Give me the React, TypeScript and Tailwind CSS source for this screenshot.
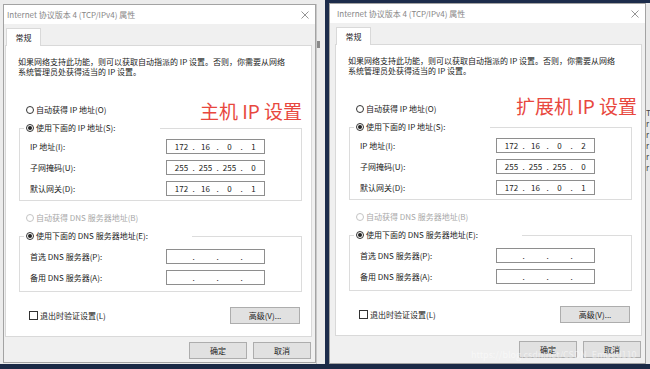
import React from 'react';

type DialogProps = {
  ip: string[];
  note: string;
  noteClass: string;
  boxClass: string;
  innerClass: string;
};

const Radio = ({ checked, disabled }: { checked?: boolean; disabled?: boolean }) => (
  <span
    className={`w-[8px] h-[8px] rounded-full border bg-white flex items-center justify-center shrink-0 ${
      disabled ? 'border-[#c4c4c4]' : 'border-[#333]'
    }`}
  >
    {checked && <span className="w-[4px] h-[4px] rounded-full bg-[#222]" />}
  </span>
);

const IpBox = ({ value }: { value?: string[] }) => (
  <div className="w-[99px] h-[15px] border border-[#8e8e8e] bg-white flex items-center pl-[4px] text-[8px] text-[#222]">
    {[0, 1, 2, 3].map((i) => (
      <React.Fragment key={i}>
        <span className="w-[21px] text-center">{value ? value[i] : ''}</span>
        {i < 3 && <span className="w-[3px] text-center">.</span>}
      </React.Fragment>
    ))}
  </div>
);

const Row = ({ label, value }: { label: string; value?: string[] }) => (
  <div className="h-[15px] flex items-center pl-[10px]">
    <span className="w-[136px] text-[8px] text-[#222]">{label}</span>
    <IpBox value={value} />
  </div>
);

const Button = ({ children, w }: { children: React.ReactNode; w: string }) => (
  <div className={`h-[17px] ${w} bg-[#e1e1e1] border border-[#adadad] flex items-center justify-center text-[8px] text-[#222]`}>
    {children}
  </div>
);

const Dialog = ({ ip, note, noteClass, boxClass, innerClass }: DialogProps) => (
  <div className={`flex flex-col bg-[#f0f0f0] border border-[#a3a3a3] ${boxClass}`}>
    {/* title bar */}
    <div className={`h-[19px] bg-white flex items-center justify-between pr-[6px] ${innerClass}`}>
      <span className="pl-[3px] text-[8px] text-[#868686] whitespace-nowrap">Internet 协议版本 4 (TCP/IPv4) 属性</span>
      <svg width="8" height="8" viewBox="0 0 8 8">
        <path d="M0.5 0.5 L7.5 7.5 M7.5 0.5 L0.5 7.5" stroke="#7a7a7a" strokeWidth="0.8" />
      </svg>
    </div>

    <div className={`flex flex-col flex-1 ${innerClass}`}>
      <div className="pt-[4px] pl-[2px]">
        <div className="relative z-10 -mb-px w-[35px] h-[18px] bg-white border border-b-0 border-[#d9d9d9] flex items-center justify-center text-[8px] text-[#222]">
          常规
        </div>
      </div>

      {/* tab page */}
      <div className="ml-[1px] mr-[3px] h-[292px] bg-white border border-[#d9d9d9] pl-[13px] pr-[9px] pt-[11px] flex flex-col">
        <p className="-ml-px text-[8px] leading-[10px] text-[#222] whitespace-nowrap">
          如果网络支持此功能，则可以获取自动指派的 IP 设置。否则，你需要从网络
          <br />
          系统管理员处获得适当的 IP 设置。
        </p>

        <div className="mt-[27px] h-[12px] flex items-center pl-[7px]">
          <Radio />
          <span className="ml-[2px] text-[8px] text-[#222]">自动获得 IP 地址(O)</span>
          <span className={`ml-auto text-[19px] leading-none text-[#e8473e] whitespace-nowrap ${noteClass}`}>{note}</span>
        </div>

        <fieldset className="mt-[6px] border border-[#dcdcdc] pb-[4px]">
          <legend className="ml-[4px] w-[136px] h-[12px] bg-white">
            <div className="h-[12px] pl-[2px] flex items-center">
              <Radio checked />
              <span className="ml-[2px] text-[8px] text-[#222]">使用下面的 IP 地址(S):</span>
            </div>
          </legend>
          <div className="pt-[5px] flex flex-col gap-[6px]">
            <Row label="IP 地址(I):" value={ip} />
            <Row label="子网掩码(U):" value={['255', '255', '255', '0']} />
            <Row label="默认网关(D):" value={['172', '16', '0', '1']} />
          </div>
        </fieldset>

        <div className="mt-[11px] h-[12px] flex items-center pl-[7px]">
          <Radio disabled />
          <span className="ml-[2px] text-[8px] text-[#a8a8a8]">自动获得 DNS 服务器地址(B)</span>
        </div>

        <fieldset className="mt-[6px] border border-[#dcdcdc] pb-[6px]">
          <legend className="ml-[4px] w-[168px] h-[12px] bg-white">
            <div className="h-[12px] pl-[2px] flex items-center">
              <Radio checked />
              <span className="ml-[2px] text-[8px] text-[#222]">使用下面的 DNS 服务器地址(E):</span>
            </div>
          </legend>
          <div className="pt-[7px] flex flex-col gap-[6px]">
            <Row label="首选 DNS 服务器(P):" />
            <Row label="备用 DNS 服务器(A):" />
          </div>
        </fieldset>

        <div className="mt-[15px] h-[17px] flex items-center pl-[10px]">
          <span className="w-[9px] h-[9px] border border-[#333] bg-white" />
          <span className="ml-[2px] text-[8px] text-[#222]">退出时验证设置(L)</span>
          <div className="ml-auto mr-[2px]">
            <Button w="w-[70px]">高级(V)...</Button>
          </div>
        </div>
      </div>

      {/* footer */}
      <div className="flex-1 flex justify-end gap-[6px] pt-[5px] pr-[4px]">
        <Button w="w-[58px]">确定</Button>
        <Button w="w-[58px]">取消</Button>
      </div>
    </div>
  </div>
);

const App = () => {
  return (
    <div className="w-[650px] h-[369px] overflow-hidden flex flex-col bg-[#1b2a46] font-['Noto_Sans_CJK_SC',sans-serif]">
      <div className="flex h-[364px]">
        {/* left screenshot */}
        <div className="w-[325px] bg-[#ececec] pl-[3px] pt-[4px] flex">
          <Dialog
            ip={['172', '16', '0', '1']}
            note="主机 IP 设置"
            noteClass=""
            boxClass="w-[313px] h-[359px]"
            innerClass=""
          />
          <div className="flex-1 pt-[37px] border-l border-[#c8c8c8]">
            <div className="w-[3px] h-[7px] bg-[#8a8a8a]" />
          </div>
        </div>

        {/* right screenshot */}
        <div className="relative w-[325px] bg-[#1d2c4b] pl-[4px] pt-[3px] flex">
          <Dialog
            ip={['172', '16', '0', '2']}
            note="扩展机 IP 设置"
            noteClass="-mr-[5px] -translate-y-[4px]"
            boxClass="w-[317px] h-[361px]"
            innerClass="pl-[4px]"
          />
          <div className="flex-1 overflow-hidden bg-[#e9e9e9] pt-[104px] text-[8px] leading-[11px] text-[#444]">
            <div>T</div>
            <div>r</div>
            <div>r</div>
            <div>r</div>
            <div>r</div>
            <div>r</div>
          </div>
          <span className="absolute left-[146px] top-[350px] text-[9px] leading-none text-white/50 whitespace-nowrap">
            https://blog.csdn.net/CSDN_Embed110
          </span>
        </div>
      </div>
      <div className="h-[5px] bg-[#1b2a46]" />
    </div>
  );
};

export default App;
